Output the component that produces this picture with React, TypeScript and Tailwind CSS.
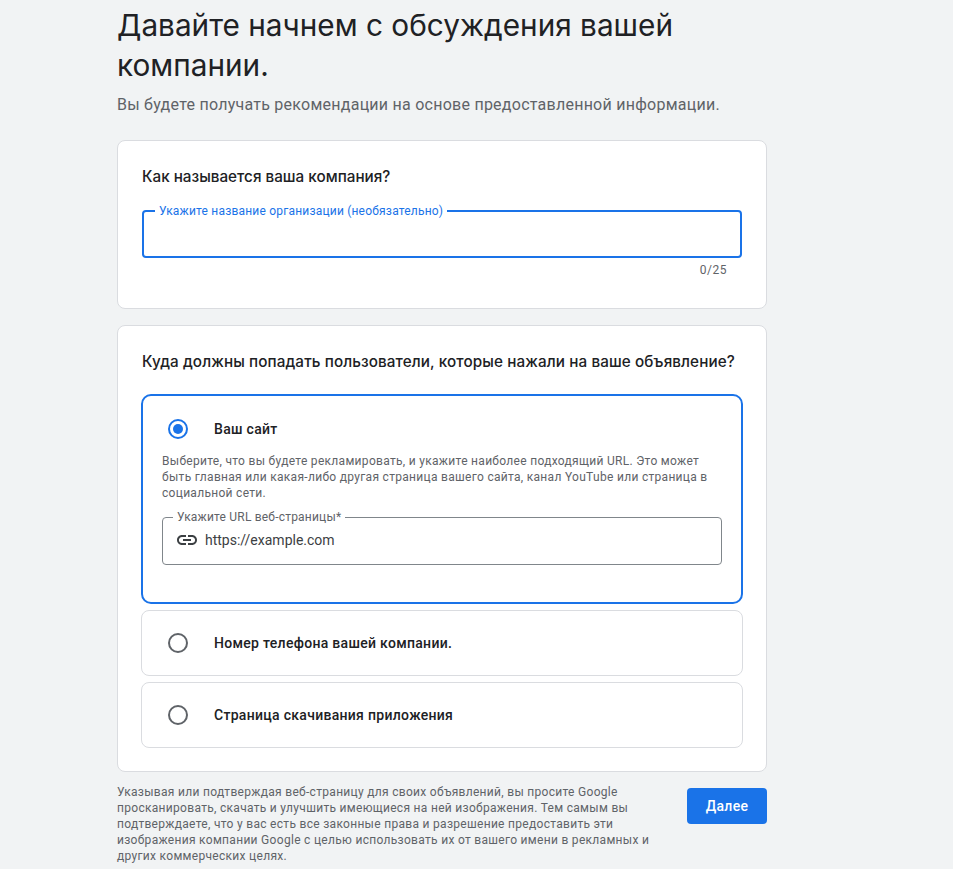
import { MdLink } from 'react-icons/md'

function Radio({ checked }: { checked?: boolean }) {
  return (
    <div className={`w-5 h-5 rounded-full border-2 flex items-center justify-center shrink-0 ${checked ? 'border-[#1a73e8]' : 'border-[#5f6368]'}`}>
      {checked && <div className="w-2.5 h-2.5 rounded-full bg-[#1a73e8]" />}
    </div>
  )
}

function OptionRow({ label }: { label: string }) {
  return (
    <div className="h-[66px] border border-[#dadce0] rounded-lg flex items-center pl-[26px] gap-[26px]">
      <Radio />
      <span className="text-[14px] font-medium tracking-[0.3px] text-[#202124]">{label}</span>
    </div>
  )
}

export default function App() {
  return (
    <div className="w-[953px] h-[869px] overflow-hidden bg-[#f1f3f4] font-['Roboto',sans-serif]">
      <div className="w-[650px] ml-[117px] pt-[5px]">
        <h1 className="text-[29.75px] leading-[40px] font-normal text-[#202124] font-['Inter',sans-serif] w-[580px]">
          Давайте начнем с обсуждения вашей компании.
        </h1>
        <p className="mt-[8px] text-[16px] leading-[24px] tracking-[0.25px] text-[#5f6368]">
          Вы будете получать рекомендации на основе предоставленной информации.
        </p>

        {/* Компания */}
        <div className="mt-[23px] h-[169px] bg-white border border-[#dadce0] rounded-lg px-6 pt-[24px]">
          <h2 className="text-[15.25px] leading-[24px] font-medium text-[#202124] font-['Inter',sans-serif]">Как называется ваша компания?</h2>
          <fieldset className="mt-[15px] h-[54px] border-2 border-[#1a73e8] rounded-[4px] px-[3px]">
            <legend className="ml-[8px] px-1 text-[12px] leading-[14px] tracking-[0.2px] text-[#1a73e8]">Укажите название организации (необязательно)</legend>
          </fieldset>
          <div className="mt-[4px] pr-[15px] text-right text-[12px] leading-[16px] tracking-[0.5px] text-[#5f6368]">0/25</div>
        </div>

        {/* Куда ведет объявление */}
        <div className="mt-[16px] h-[447px] bg-white border border-[#dadce0] rounded-lg px-[23px] pt-[24px]">
          <h2 className="ml-px text-[15.25px] leading-[24px] tracking-[0.1px] font-medium text-[#202124] font-['Inter',sans-serif] whitespace-nowrap">Куда должны попадать пользователи, которые нажали на ваше объявление?</h2>

          <div className="mt-[20px] h-[210px] border-2 border-[#1a73e8] rounded-[10px] px-[19px] pt-[23px]">
            <div className="flex items-center gap-[26px] pl-[6px] h-5">
              <Radio checked />
              <span className="text-[14px] font-medium tracking-[0.3px] text-[#202124]">Ваш сайт</span>
            </div>
            <p className="mt-[14px] text-[12px] leading-[16px] tracking-[0.3px] text-[#5f6368]">
              Выберите, что вы будете рекламировать, и укажите наиболее подходящий URL. Это может быть главная или какая-либо другая страница вашего сайта, канал YouTube или страница в социальной сети.
            </p>
            <fieldset className="mt-[9px] h-[55px] border border-[#80868b] rounded-[4px] px-[10px]">
              <legend className="px-1 text-[12px] leading-[14px] tracking-[0.2px] text-[#5f6368]">Укажите URL веб-страницы*</legend>
              <div className="flex items-center gap-[6px] mt-[4px] ml-[2px]">
                <MdLink className="w-6 h-6 text-[#3c4043]" />
                <span className="text-[14px] leading-[20px] text-[#3c4043]">https://example.com</span>
              </div>
            </fieldset>
          </div>

          <div className="mt-[6px] flex flex-col gap-[6px]">
            <OptionRow label="Номер телефона вашей компании." />
            <OptionRow label="Страница скачивания приложения" />
          </div>
        </div>

        <div className="mt-[12px] flex justify-between items-start">
          <p className="w-[540px] text-[12px] leading-[16px] tracking-[0.3px] text-[#5f6368]">
            Указывая или подтверждая веб-страницу для своих объявлений, вы просите Google просканировать, скачать и улучшить имеющиеся на ней изображения. Тем самым вы подтверждаете, что у вас есть все законные права и разрешение предоставить эти изображения компании Google с целью использовать их от вашего имени в рекламных и других коммерческих целях.
          </p>
          <button className="mt-[4px] w-20 h-9 rounded-[4px] bg-[#1a73e8] text-white text-[14px] font-medium tracking-[0.25px]">Далее</button>
        </div>
      </div>
    </div>
  )
}
